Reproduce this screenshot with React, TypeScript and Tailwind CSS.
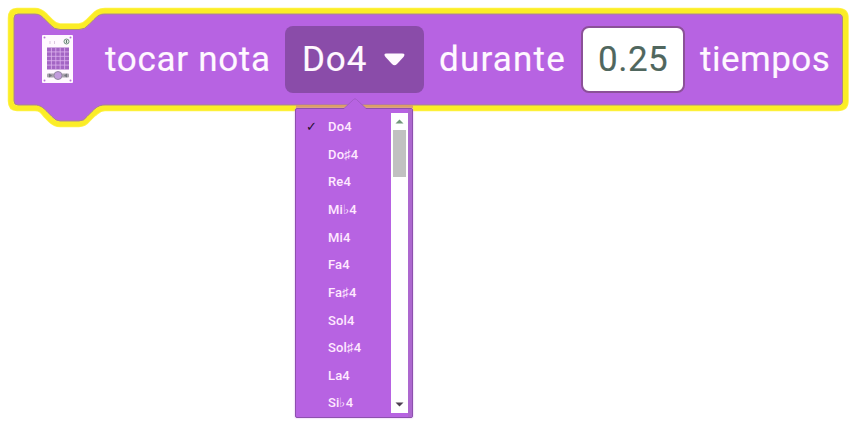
const notes = ['Do4', 'Do♯4', 'Re4', 'Mi♭4', 'Mi4', 'Fa4', 'Fa♯4', 'Sol4', 'Sol♯4', 'La4', 'Si♭4'];

function BlockShape() {
  return (
    <svg className="absolute left-0 top-0" width="859" height="132" viewBox="0 0 859 132" fill="none">
      <path
        d="M17 11H35C41 11 43 14 46 17L51 22Q55 26.500 60 26.500H79Q84 26.500 88 22L93 17C97 13 99 11 105 11H838Q845.500 11 845.500 18V101Q845.500 108 838 108H105C99 108 97 111 93 114L88 119Q84 124 79 124H60Q55 124 51 120L46 115C43 111 41 108 35 108H17Q11 108 11 101V18Q11 11 17 11Z"
        fill="#b763e2"
        stroke="#fff34d"
        strokeWidth="6.500"
        strokeLinejoin="round"
      />
      <path
        d="M17 11H35C41 11 43 14 46 17L51 22Q55 26.500 60 26.500H79Q84 26.500 88 22L93 17C97 13 99 11 105 11H838Q845.500 11 845.500 18V101Q845.500 108 838 108H105C99 108 97 111 93 114L88 119Q84 124 79 124H60Q55 124 51 120L46 115C43 111 41 108 35 108H17Q11 108 11 101V18Q11 11 17 11Z"
        stroke="#fbed27"
        strokeWidth="5"
      />
      <path
        d="M18 14H35C40 14 42 16.500 45 19.500L50 24.500Q54 29.500 60 29.500H79Q85 29.500 89 24.500L94 19.500C98 15.500 100 14 105 14H838Q842.500 14 842.500 18V101Q842.500 105 838 105H105C99 105 96 107.500 92 111.500L87 116.500Q84 121 79 121H60Q56 121 52 116.500L47 111.500C43 107.500 40 105 35 105H18Q14 105 14 101V18Q14 14 18 14Z"
        fill="#b763e2"
        stroke="#a98a80"
        strokeWidth="1"
      />
      <path d="M296 106.500H413" stroke="#dca064" strokeWidth="3" />
    </svg>
  );
}

function DeviceIcon() {
  const cells = [0, 1, 2, 3, 4];
  return (
    <svg className="block h-[48px] w-[31px] shrink-0" viewBox="0 0 31 48">
      <rect width="31" height="48" rx="1" fill="#fff8ff" />
      <g fill="#b873d8">
        <circle cx="2.500" cy="2.500" r="1" />
        <circle cx="28.500" cy="2.500" r="1" />
        <circle cx="2.500" cy="45.500" r="1" />
        <circle cx="28.500" cy="45.500" r="1" />
      </g>
      <path d="M8 6v3M12.500 6v3" stroke="#dcc5df" />
      <circle cx="24.500" cy="6.500" r="2.500" fill="#e5e9e5" stroke="#719080" />
      <path d="M24.500 5v3" stroke="#607c70" />
      <rect x="5" y="12.500" width="22" height="22" fill="#a365c4" />
      {cells.slice(1).map((i) => (
        <path key={i} d={`M${5 + i * 4.4} 12.500v22M5 ${12.5 + i * 4.4}h22`} stroke="#ddb2ef" strokeWidth=".8" />
      ))}
      <rect x="5" y="38.500" width="22" height="4" rx="1" fill="#a9a2ad" />
      <path d="M7 38.500l3 2-3 2M25 38.500l-3 2 3 2" fill="#72757c" />
      <circle cx="16" cy="40.500" r="4" fill="#c29bdd" stroke="#9688a5" />
    </svg>
  );
}

function NoteMenu() {
  return (
    <div className="absolute left-[295px] top-[108px] flex h-[310px] w-[118px] rounded-[2px] border-[1.5px] border-[#8d50ae] bg-[#b763e2] shadow-[0_0_2px_#d9a5ef]">
      <svg className="absolute left-[48px] top-[-11px]" width="22" height="12" viewBox="0 0 22 12">
        <path d="M0 10.500 9.500 1.500Q11 0 12.500 1.500L22 10.500V12H0Z" fill="#b763e2" />
        <path d="M0 10.500 9.500 1.500Q11 0 12.500 1.500L22 10.500" fill="none" stroke="#a35bc6" />
      </svg>
      <ul className="w-[95px] pt-[4px] text-[13px] font-medium tracking-[0.15px] text-[#ffe9ff]">
        {notes.map((note, i) => (
          <li key={note} className="flex h-[27.650px] items-center">
            <span className="w-[32px] pl-[10px] font-['DejaVu_Sans',sans-serif] text-[13px] font-bold text-[#26102f]">{i === 0 ? '✓' : ''}</span>
            <span>{note}</span>
          </li>
        ))}
      </ul>
      <div className="mt-[4px] flex h-[300px] w-[17px] flex-col items-center bg-white">
        <svg width="17" height="17" viewBox="0 0 17 17"><path d="M4.500 10.500 8.500 6.500 12.500 10.500Z" fill="#71987a" /></svg>
        <div className="h-[47px] w-[13px] bg-[#c1c1c1]" />
        <svg className="mt-auto" width="17" height="17" viewBox="0 0 17 17"><path d="M4.500 6.500 8.500 10.500 12.500 6.500Z" fill="#4d4051" /></svg>
      </div>
      <div className="grow bg-[#ad68cf]" />
    </div>
  );
}

export default function App() {
  return (
    <main className="relative h-[425px] w-[859px] overflow-hidden bg-white font-['Roboto',sans-serif]">
      <BlockShape />
      <div className="relative flex h-[118px] items-center whitespace-nowrap pl-[42px] text-[35px] leading-[40px] text-[#fff8ff] [-webkit-text-stroke:0.15px_currentColor]">
        <DeviceIcon />
        <span className="ml-[32px] w-[180px] pt-[2px] tracking-[0.7px]">tocar nota</span>
        <div className="flex h-[67px] w-[139px] items-center rounded-[8px] bg-[#8a4ca9] pl-[17px]">
          <span className="w-[82px] pt-[2px] tracking-[0.9px]">Do4</span>
          <svg width="22" height="16" viewBox="0 0 22 16" className="mt-[2px]"><path d="M2.500 1.500H18Q22 1.500 19.500 5L13 12Q10.500 14.500 8 12L1.500 5Q-1 1.500 2.500 1.500Z" fill="#fff9ff" /></svg>
        </div>
        <span className="ml-[15px] w-[142px] pt-[2px] tracking-[1.2px]">durante</span>
        <div className="flex h-[67px] w-[104px] items-center rounded-[8px] border-2 border-[#8b5198] bg-white pl-[15px] text-[#50675e]">
          <span className="pt-[2px] tracking-[0.5px]">0.25</span>
        </div>
        <span className="ml-[15px] pt-[2px] tracking-[0.5px]">tiempos</span>
      </div>
      <NoteMenu />
    </main>
  );
}
